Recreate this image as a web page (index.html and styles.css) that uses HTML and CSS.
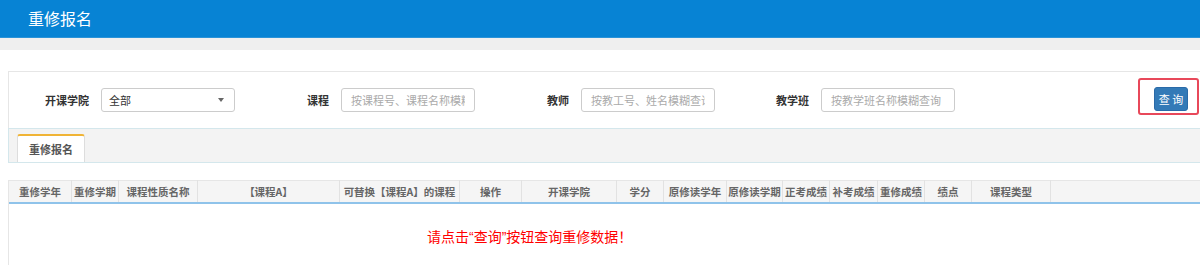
FILE: index.html
```html
<!DOCTYPE html>
<html lang="zh-CN">
<head>
  <meta charset="UTF-8">
  <title>重修报名</title>
  <link rel="stylesheet" href="styles.css">
</head>
<body>
  <div class="topbar">重修报名</div>
  <div class="band"></div>

  <div class="panel">
    <div class="filters">
      <div class="field">
        <label>开课学院</label>
        <div class="select">全部<span class="caret"></span></div>
      </div>
      <div class="field">
        <label>课程</label>
        <input type="text" placeholder="按课程号、课程名称模糊查询">
      </div>
      <div class="field">
        <label>教师</label>
        <input type="text" placeholder="按教工号、姓名模糊查询">
      </div>
      <div class="field">
        <label>教学班</label>
        <input type="text" placeholder="按教学班名称模糊查询">
      </div>
      <div class="search-box">
        <button class="btn-search">查 询</button>
      </div>
    </div>
    <div class="tabs">
      <div class="tab">重修报名</div>
    </div>
  </div>

  <div class="grid">
    <table>
      <thead>
        <tr>
          <th class="c1">重修学年</th>
          <th class="c46">重修学期</th>
          <th class="c78">课程性质名称</th>
          <th class="c141">【课程A】</th>
          <th class="c119">可替换【课程A】的课程</th>
          <th class="c61">操作</th>
          <th class="c94">开课学院</th>
          <th class="c46">学分</th>
          <th class="c62">原修读学年</th>
          <th class="c55">原修读学期</th>
          <th class="c46">正考成绩</th>
          <th class="c47">补考成绩</th>
          <th class="c46">重修成绩</th>
          <th class="c46">绩点</th>
          <th class="c78">课程类型</th>
          <th class="rest"></th>
        </tr>
      </thead>
    </table>
    <div class="empty">请点击“查询”按钮查询重修数据！</div>
  </div>
</body>
</html>
```

FILE: styles.css
```css
body {
  font-family: "Noto Sans CJK SC", "Noto Sans", sans-serif;
  font-size: 12px;
  color: #333;
  margin: 0;
  padding: 0;
  overflow: hidden;
  background: #fff;
}

.topbar {
  height: 37px;
  line-height: 37px;
  background: #0783d4;
  border-bottom: 1px solid #2a93d8;
  color: #fff;
  font-size: 16px;
  padding-left: 28px;
}

.band {
  height: 12px;
  background: #efefef;
}

.panel {
  margin: 21px -20px 0 8px;
  border: 1px solid #e6e6e6;
  border-bottom: none;
}

.filters {
  display: flex;
  align-items: center;
  height: 56px;
}

.field {
  display: flex;
  align-items: center;
  width: 240px;
}

.field label {
  width: 80px;
  padding-right: 12px;
  text-align: right;
  font-weight: bold;
  font-size: 11px;
  color: #333;
}

.select,
.field input {
  box-sizing: border-box;
  width: 134px;
  height: 24px;
  border: 1px solid #ccc;
  border-radius: 3px;
  font-family: inherit;
  font-size: 11px;
  padding: 0 9px;
  margin: 0;
  color: #333;
  background: #fff;
}

.select {
  display: flex;
  align-items: center;
  justify-content: space-between;
  padding-left: 7px;
  line-height: 20px;
}

.caret {
  width: 0;
  height: 0;
  border-left: 3px solid transparent;
  border-right: 3px solid transparent;
  border-top: 4px solid #666;
  margin-right: 1px;
}

.field input::placeholder {
  color: #aaa;
}

.search-box {
  box-sizing: border-box;
  align-self: flex-start;
  margin: 6px 20px 0 auto;
  width: 61px;
  height: 37px;
  border: 2px solid #e8485a;
  border-radius: 3px;
  padding: 7px 0 0 14px;
}

.btn-search {
  display: block;
  width: 34px;
  height: 24px;
  border: 1px solid #2a6aa8;
  border-radius: 3px;
  background: #337ab7;
  color: #fff;
  font-family: inherit;
  font-size: 11px;
  padding: 0;
  cursor: pointer;
}

.tabs {
  height: 33px;
  background: #f3f3f3;
  border-top: 1px solid #d4e7ec;
  border-bottom: 1px solid #d4e7ec;
  margin-left: -1px;
  border-left: 1px solid #d4e7ec;
  display: flex;
  align-items: flex-end;
  padding-left: 8px;
}

.tab {
  width: 66px;
  height: 26px;
  line-height: 26px;
  text-align: center;
  background: #fff;
  border: 1px solid #ddd;
  border-top: 2px solid #f0b436;
  border-bottom: none;
  border-radius: 3px 3px 0 0;
  font-weight: bold;
  font-size: 11px;
  color: #555;
}

.grid {
  margin: 17px -20px 0 8px;
  border-left: 1px solid #e6e6e6;
  height: 90px;
}

table {
  border-collapse: collapse;
  table-layout: fixed;
  width: 100%;
}

th {
  height: 21px;
  padding: 0;
  background: #f5f5f5;
  border-top: 1px solid #e6e6e6;
  border-right: 1px solid #e2e2e2;
  border-bottom: 2px solid #8fc3ea;
  color: #666;
  font-weight: bold;
  font-size: 10.5px;
  text-align: center;
  white-space: nowrap;
  overflow: hidden;
}

th.rest { border-right: none; }

.c1 { width: 62px; }
.c46 { width: 46px; }
.c47 { width: 47px; }
.c55 { width: 55px; }
.c61 { width: 61px; }
.c62 { width: 62px; }
.c78 { width: 78px; }
.c94 { width: 94px; }
.c119 { width: 119px; }
.c141 { width: 141px; }

.empty {
  padding-top: 22px;
  padding-left: 418px;
  color: #f00;
  font-family: "Liberation Sans", "Noto Sans CJK SC", sans-serif;
  font-size: 14px;
}
```
